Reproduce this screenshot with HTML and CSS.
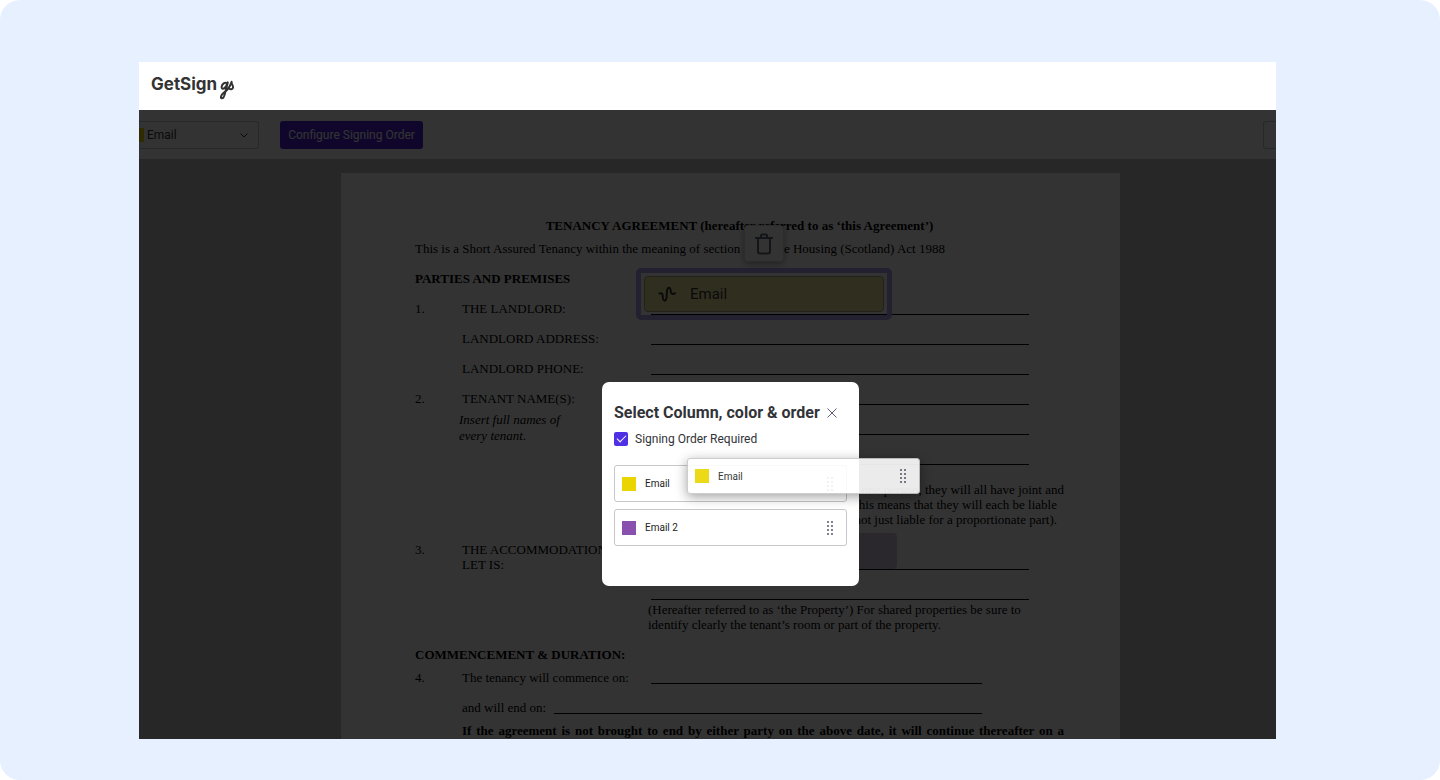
FILE: index.html
```html
<!DOCTYPE html>
<html lang="en">
<head>
<meta charset="utf-8">
<title>GetSign</title>
<link rel="stylesheet" href="styles.css">
</head>
<body>
<div class="stage">
  <div class="app">
    <header class="topbar">
      <span class="brand">GetSign</span>
      <svg class="brand-mark" viewBox="0 0 16 23" width="16" height="23" aria-hidden="true">
        <path d="M8 6.200C6 4.600 3 7 2.600 9.800C2.400 12.600 5.400 12.200 7.200 9L8.800 5.400L6.300 15C5.500 19 4.200 21.600 2.600 21.300C1.200 20.800 2 17.600 5.200 15.400C8.500 13.200 10.800 10 12.600 4.800C12.300 7.400 14.600 8.600 14 10.800C13.500 12.600 11.200 12.600 10.400 11.600"/>
      </svg>
    </header>
    <div class="workspace">
      <div class="toolbar">
        <button class="column-picker" type="button">
          <span class="picker-swatch"></span>
          <span class="picker-label">Email</span>
          <svg viewBox="0 0 10 10" width="10" height="10" aria-hidden="true"><path d="M1.500 3.500L5 7L8.500 3.500"/></svg>
        </button>
        <button class="configure" type="button">Configure Signing Order</button>
        <button class="edge-button" type="button" aria-label="More"></button>
      </div>
      <main class="canvas">
        <article class="document">
          <h1 class="doc-title">TENANCY AGREEMENT (hereafter referred to as ‘this Agreement’)</h1>
          <p class="intro">This is a Short Assured Tenancy within the meaning of section 32 of the Housing (Scotland) Act 1988</p>
          <h2 class="section">PARTIES AND PREMISES</h2>
          <div class="row"><span>1.</span><span>THE LANDLORD:</span><span class="rule"></span></div>
          <div class="row"><span></span><span>LANDLORD ADDRESS:</span><span class="rule"></span></div>
          <div class="row"><span></span><span>LANDLORD PHONE:</span><span class="rule"></span></div>
          <div class="names">
            <span>2.</span>
            <div><p>TENANT NAME(S):</p><p class="hint">Insert full names of<br>every tenant.</p></div>
            <div class="rules"><span class="rule"></span><span class="rule"></span><span class="rule"></span></div>
          </div>
          <div class="liability">
            <p>one person, they will all have joint and</p>
            <p class="inset">This means that they will each be liable<br>not just liable for a proportionate part).</p>
          </div>
          <div class="names property">
            <span>3.</span>
            <p>THE ACCOMMODATION<br>LET IS:</p>
            <div class="rules"><span class="rule"></span><span class="rule"></span></div>
          </div>
          <p class="note">(Hereafter referred to as ‘the Property’) For shared properties be sure to identify clearly the tenant’s room or part of the property.</p>
          <h2 class="section second">COMMENCEMENT &amp; DURATION:</h2>
          <div class="row short"><span>4.</span><span>The tenancy will commence on:</span><span class="rule"></span></div>
          <div class="row ending"><span></span><span>and will end on:</span><span class="rule"></span></div>
          <p class="closing">If the agreement is not brought to end by either party on the above date, it will continue thereafter on a</p>

          <div class="placed">
            <div class="placed-field">
              <svg viewBox="0 0 18 18" width="18" height="18" aria-hidden="true"><path d="M1.500 8.500C4 7.800 4.600 8.500 4.700 11C5 17 8.200 17 8.600 12L9 6C9.500 1.500 12.400 1.500 12.700 6C12.900 9 14 9.500 17 8.300"/></svg>
              <span>Email</span>
            </div>
            <button class="delete" type="button" aria-label="Delete field">
              <svg viewBox="0 0 20 22" width="20" height="22" aria-hidden="true"><path d="M1 5H19M4 5V18.500Q4 20.500 6 20.500H14Q16 20.500 16 18.500V5M7 5V2.500Q7 1.500 8 1.500H12Q13 1.500 13 2.500V5"/></svg>
            </button>
          </div>
          <div class="placed-second"></div>
        </article>
      </main>
      <div class="backdrop">
        <section class="modal" role="dialog" aria-labelledby="modal-title">
          <div class="modal-head">
            <h2 class="modal-title" id="modal-title">Select Column, color &amp; order</h2>
            <button class="close" type="button" aria-label="Close">
              <svg viewBox="0 0 12 12" width="12" height="12" aria-hidden="true"><path d="M1.500 1.500L10.500 10.500M10.500 1.500L1.500 10.500"/></svg>
            </button>
          </div>
          <label class="check"><input type="checkbox" checked>Signing Order Required</label>
          <ul class="order">
            <li class="item"><span class="swatch yellow"></span><span class="name">Email</span>
              <svg class="dots" viewBox="0 0 8 16" width="8" height="16" aria-hidden="true"><path d="M2 2h0M6 2h0M2 6h0M6 6h0M2 10h0M6 10h0M2 14h0M6 14h0"/></svg></li>
            <li class="item"><span class="swatch purple"></span><span class="name">Email 2</span>
              <svg class="dots" viewBox="0 0 8 16" width="8" height="16" aria-hidden="true"><path d="M2 2h0M6 2h0M2 6h0M6 6h0M2 10h0M6 10h0M2 14h0M6 14h0"/></svg></li>
          </ul>
          <div class="item dragged"><span class="swatch yellow"></span><span class="name">Email</span>
            <svg class="dots" viewBox="0 0 8 16" width="8" height="16" aria-hidden="true"><path d="M2 2h0M6 2h0M2 6h0M6 6h0M2 10h0M6 10h0M2 14h0M6 14h0"/></svg></div>
        </section>
      </div>
    </div>
  </div>
</div>
</body>
</html>
```
FILE: styles.css
```css
* { box-sizing: border-box; }
body { margin: 0; background: #fff; font-family: Roboto, sans-serif; color: #323338; }
h1, h2, p, ul { margin: 0; padding: 0; }
button { font: inherit; color: inherit; padding: 0; }
svg { fill: none; stroke: currentColor; flex: none; }

.stage { display: flex; height: 100vh; padding: 62px 164px 41px 139px; background: #e6f0ff; border-radius: 20px; }
.app { flex: 1; display: flex; flex-direction: column; min-width: 0; overflow: hidden; background: #fff; }
.topbar { flex: none; display: flex; align-items: center; height: 48px; padding: 0 12px; gap: 2px; }
.brand { font: 700 17px/24px Inter, sans-serif; color: #333; padding-bottom: 4px; }
.brand-mark { margin-top: 4px; stroke: #333; stroke-width: 2; stroke-linecap: round; stroke-linejoin: round; }

.workspace { position: relative; flex: 1; display: flex; flex-direction: column; min-height: 0; overflow: hidden; }
.toolbar { flex: none; display: flex; align-items: center; height: 49px; background: #fff; }
.column-picker { display: flex; align-items: center; width: 120px; height: 28px; padding-right: 9px; background: #fff; border: 1px solid #c3c6d4; border-left: 0; border-radius: 0 3px 3px 0; font-size: 12px; }
.picker-swatch { width: 5px; height: 14px; background: #ebd500; }
.picker-label { flex: 1; padding-left: 3px; text-align: left; }
.configure { width: 143px; height: 28px; margin-left: 21px; border: 0; border-radius: 3px; background: #4f22d8; color: #fff; font-size: 12px; }
.edge-button { width: 13px; height: 28px; margin-left: auto; background: #fff; border: 1px solid #c3c6d4; border-right: 0; border-radius: 3px 0 0 3px; }

.canvas { flex: 1; min-height: 0; padding: 14px 156px 0 202px; background: #c0c0c6; overflow: hidden; }
.document { position: relative; height: 100%; padding: 45px 56px 0 74px; background: #fff; color: #000; font: 13px/15px "Liberation Serif", serif; }
.doc-title { font-size: 13px; line-height: 15px; text-align: center; }
.intro { margin-top: 8px; white-space: nowrap; }
.section { margin-top: 15px; margin-bottom: 15px; font-size: 13px; line-height: 15px; }
.row, .names { display: grid; grid-template-columns: 47px 189px 1fr; padding-right: 35px; }
.row { height: 30px; }
.rule { display: block; height: 14px; border-bottom: 1px solid #000; }
.names { height: 91px; }
.hint { margin: 6px 0 0 -3px; line-height: 16px; font-style: italic; }
.rules { display: grid; grid-auto-rows: 30px; }
.liability { text-align: right; white-space: nowrap; }
.inset { padding-right: 7px; }
.property { height: 60px; margin-top: 15px; }
.property .rules { padding-top: 14px; }
.note { margin-left: 233px; padding-right: 30px; }
.second { margin-bottom: 8px; }
.short { padding-right: 82px; }
.ending { grid-template-columns: 47px 92px 1fr; padding-right: 82px; height: 23px; }
.closing { margin-left: 47px; font-weight: bold; text-align: justify; text-align-last: justify; }

.placed { position: absolute; left: 295px; top: 95px; width: 256px; height: 52px; padding: 3px; border: 5px solid #b0a0f0; border-radius: 5px; }
.placed-field { display: flex; align-items: center; gap: 14px; height: 36px; padding-left: 13px; border: 1px solid #a8a48a; border-radius: 4px; background: #f0e89c; font: 15px/18px Roboto, sans-serif; color: #323338; }
.placed-field svg { stroke-width: 2; stroke-linecap: round; }
.delete { position: absolute; left: 103px; top: -48px; display: grid; place-items: center; width: 40px; height: 37px; border: 1px solid #ddd; border-radius: 4px; background: #fff; box-shadow: 0 2px 6px #0005; }
.delete svg { stroke: #676879; stroke-width: 2; }
.placed-second { position: absolute; left: 316px; top: 360px; width: 240px; height: 36px; border-radius: 4px; background: #d0c8dc; }

.backdrop { position: absolute; inset: 0; display: flex; justify-content: center; align-items: flex-start; padding: 272px 0 0 46px; background: rgba(0, 0, 0, 0.8); }
.modal { position: relative; width: 257px; height: 204px; padding: 21px 12px; background: #fff; border-radius: 7px; }
.modal-head { display: flex; align-items: center; gap: 6px; height: 19px; }
.modal-title { font-size: 16px; line-height: 19px; font-weight: 700; white-space: nowrap; }
.close { display: flex; border: 0; background: none; color: #5c5c70; }
.check { display: flex; align-items: center; gap: 7px; margin-top: 9px; height: 16px; font-size: 12px; line-height: 16px; }
.check input { appearance: none; width: 14px; height: 14px; margin: 0; border-radius: 2px; background: #5030e5; display: grid; place-items: center; }
.check input::before { content: ""; width: 8px; height: 4px; border: solid #fff; border-width: 0 0 1px 1px; rotate: -45deg; margin-bottom: 3px; }
.order { display: grid; gap: 7px; margin-top: 18px; list-style: none; }
.item { display: flex; align-items: center; height: 37px; padding: 0 12px 0 7px; border: 1px solid #c8c8ca; border-radius: 3px; font-size: 10px; color: #222; }
.swatch { width: 14px; height: 14px; }
.yellow { background: #ebd500; }
.purple { background: #8a50ad; }
.name { flex: 1; padding-left: 9px; }
.dots { stroke: #55556b; stroke-width: 2; stroke-linecap: round; }
.dragged { position: absolute; left: 85px; top: 76px; width: 233px; height: 36px; background: #fff; opacity: 0.9; box-shadow: 0 3px 12px #0006; }
```
